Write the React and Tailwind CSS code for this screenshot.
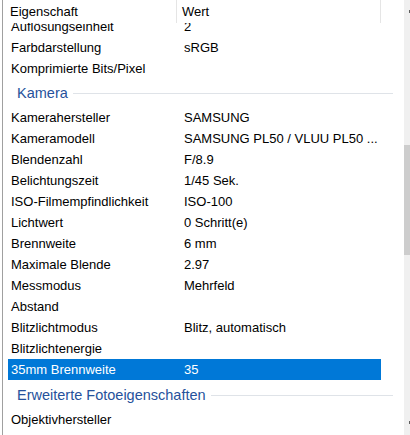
import React from "react";

const rowsTop = [
  ["Auflösungseinheit", "2"],
  ["Farbdarstellung", "sRGB"],
  ["Komprimierte Bits/Pixel", ""],
];

const kamera = [
  ["Kamerahersteller", "SAMSUNG"],
  ["Kameramodell", "SAMSUNG PL50 / VLUU PL50 ..."],
  ["Blendenzahl", "F/8.9"],
  ["Belichtungszeit", "1/45 Sek."],
  ["ISO-Filmempfindlichkeit", "ISO-100"],
  ["Lichtwert", "0 Schritt(e)"],
  ["Brennweite", "6 mm"],
  ["Maximale Blende", "2.97"],
  ["Messmodus", "Mehrfeld"],
  ["Abstand", ""],
  ["Blitzlichtmodus", "Blitz, automatisch"],
  ["Blitzlichtenergie", ""],
  ["35mm Brennweite", "35", true],
];

const erweitert = [["Objektivhersteller", ""]];

const Row = ({ label, value, selected }) => (
  <div
    className={`ml-[5px] flex h-[21px] w-[373px] shrink-0 items-center leading-[21px] ${
      selected ? "bg-[#0078d7] text-white" : "text-black"
    }`}
  >
    <div className="w-[176px] shrink-0 pl-[3px] whitespace-nowrap">{label}</div>
    <div className="flex-1 truncate whitespace-nowrap">{value}</div>
  </div>
);

const Group = ({ title, tall }) => (
  <div
    className={`ml-[5px] mr-[11px] flex shrink-0 items-center pl-[9px] ${
      tall ? "h-[29px] pt-[2px]" : "h-[28px] pt-px"
    }`}
  >
    <span className="text-[14.5px] text-[#26529c] whitespace-nowrap">{title}</span>
    <div className="ml-[5px] h-px flex-1 bg-[#dfe3e8]" />
  </div>
);

export default function App() {
  return (
    <div className="flex h-[435px] w-[410px] overflow-hidden bg-white font-['Liberation_Sans',Arial,sans-serif] text-[13px]">
      <div className="w-[2px] shrink-0" />
      <div className="flex min-w-0 flex-1 flex-col border-l border-[#a0a0a0]">
        <div className="flex h-[23px] shrink-0 items-center bg-white">
          <div className="h-full w-[174px] shrink-0 border-r border-[#e5e5e5] pl-[7px] leading-[23px]">
            Eigenschaft
          </div>
          <div className="h-full w-[204px] shrink-0 border-r border-[#e5e5e5] pl-[5px] leading-[23px]">
            Wert
          </div>
        </div>
        <div className="flex min-h-0 flex-1 flex-col overflow-hidden">
          <div className="-mt-[7px] flex flex-col">
            {rowsTop.map(([l, v]) => (
              <Row key={l} label={l} value={v} />
            ))}
            <Group title="Kamera" />
            {kamera.map(([l, v, s]) => (
              <Row key={l} label={l} value={v} selected={s} />
            ))}
            <Group title="Erweiterte Fotoeigenschaften" tall />
            {erweitert.map(([l, v]) => (
              <Row key={l} label={l} value={v} />
            ))}
          </div>
        </div>
      </div>
      <div className="flex w-[6px] shrink-0 flex-col bg-[#f0f0f0]">
        <div className="ml-auto mt-[10px] h-[3px] w-px bg-[#606060]" />
        <div className="mt-[132px] h-[110px] w-full bg-[#cdcdcd]" />
        <div className="mb-[11px] ml-auto mt-auto h-[3px] w-px bg-[#606060]" />
      </div>
    </div>
  );
}
